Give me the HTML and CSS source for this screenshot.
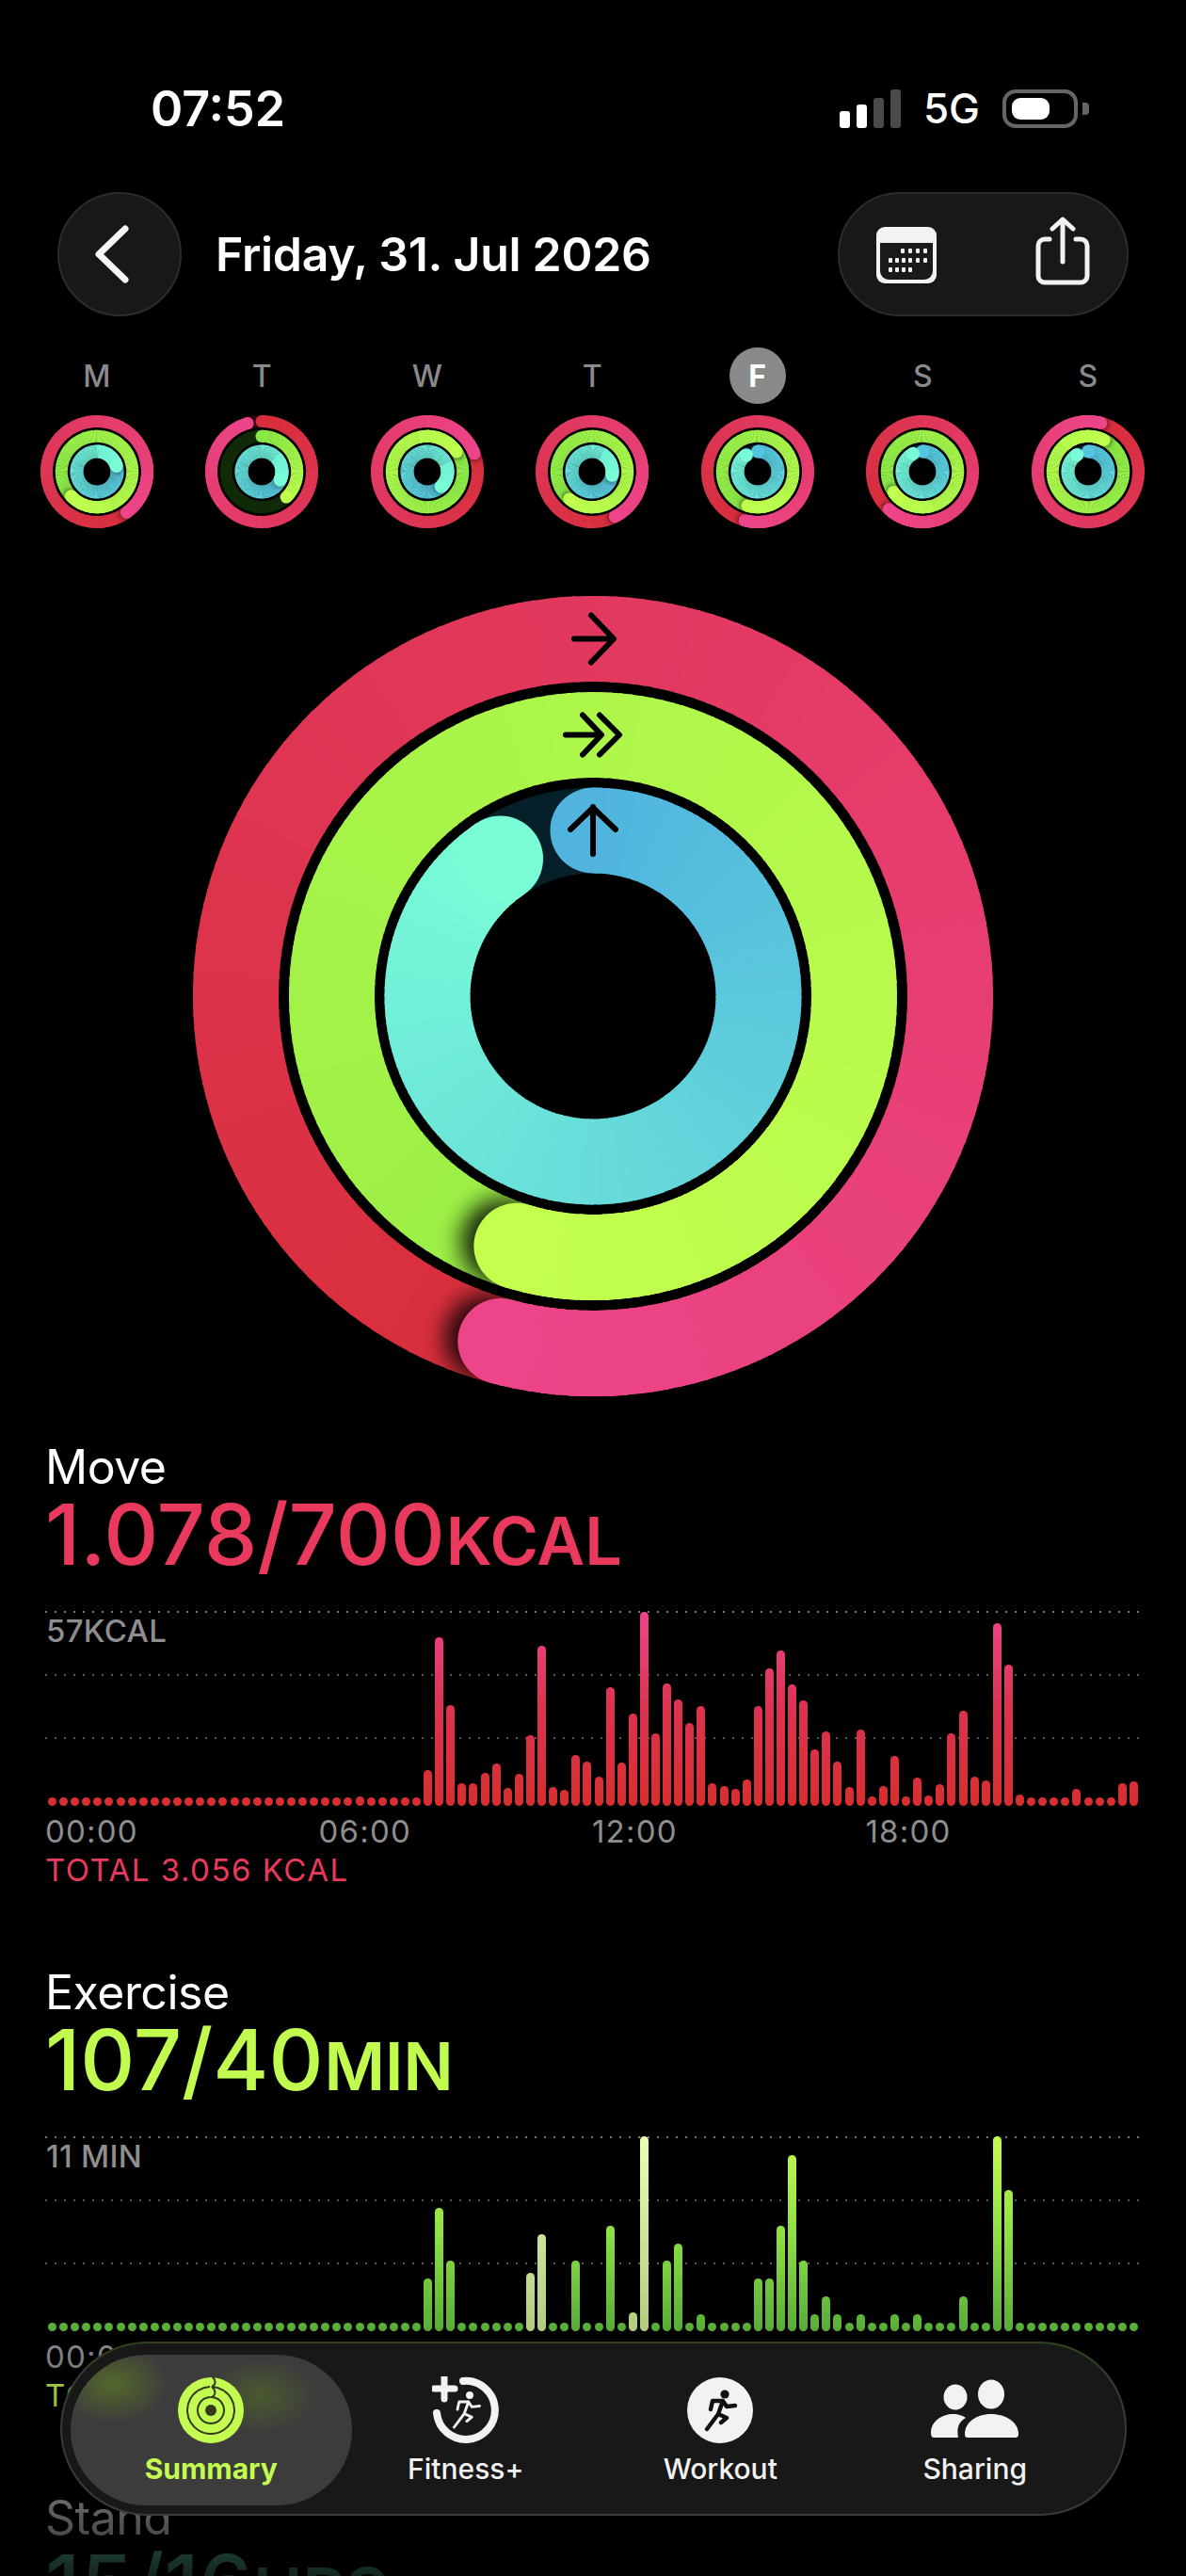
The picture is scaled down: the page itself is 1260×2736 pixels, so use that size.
FILE: index.html
```html
<!DOCTYPE html>
<html lang="en">
<head>
    <meta charset="UTF-8">
    <meta name="viewport" content="width=device-width, initial-scale=1.0">
    <title>Activity Summary</title>
    <link rel="stylesheet" href="styles.css">
</head>
<body>
    <div class="page">
        <div class="status">
            <span class="status-time">07:52</span>
            <div class="signal">
                <i class="sig-1"></i><i class="sig-2"></i><i class="sig-3"></i><i class="sig-4"></i>
            </div>
            <span class="status-net">5G</span>
            <div class="battery"><div class="battery-fill"></div></div>
            <div class="battery-nub"></div>
        </div>

        <div class="nav">
            <div class="back-btn">
                <svg width="40" height="62" viewBox="0 0 40 62"><polyline points="33,4 5,31 33,58" fill="none" stroke="#f5f5f5" stroke-width="7" stroke-linecap="round" stroke-linejoin="round"/></svg>
            </div>
            <h1 class="nav-title">Friday, 31. Jul 2026</h1>
            <div class="nav-actions">
                <svg class="cal-icon" width="64" height="60" viewBox="0 0 64 60">
                    <rect x="0" y="0" width="64" height="60" rx="9" fill="#f2f2f2"/>
                    <path d="M4 17H60V47a9 9 0 0 1-9 9H13a9 9 0 0 1-9-9Z" fill="#1a1a1a"/>
                    <g id="calDots" fill="#f2f2f2"></g>
                </svg>
                <svg width="60" height="74" viewBox="0 0 60 74">
                    <path d="M16 24H11a7 7 0 0 0-7 7V63a7 7 0 0 0 7 7H49a7 7 0 0 0 7-7V31a7 7 0 0 0-7-7H44" fill="none" stroke="#f2f2f2" stroke-width="5" stroke-linecap="round"/>
                    <path d="M30 48V3M19 13 30 3 41 13" fill="none" stroke="#f2f2f2" stroke-width="5" stroke-linecap="round" stroke-linejoin="round"/>
                </svg>
            </div>
        </div>

        <div class="week">
            <div class="day"><span class="day-label">M</span><svg class="day-ring" id="ring0" width="124" height="124" viewBox="0 0 124 124"></svg></div>
            <div class="day"><span class="day-label">T</span><svg class="day-ring" id="ring1" width="124" height="124" viewBox="0 0 124 124"></svg></div>
            <div class="day"><span class="day-label">W</span><svg class="day-ring" id="ring2" width="124" height="124" viewBox="0 0 124 124"></svg></div>
            <div class="day"><span class="day-label">T</span><svg class="day-ring" id="ring3" width="124" height="124" viewBox="0 0 124 124"></svg></div>
            <div class="day"><span class="day-label today">F</span><svg class="day-ring" id="ring4" width="124" height="124" viewBox="0 0 124 124"></svg></div>
            <div class="day"><span class="day-label">S</span><svg class="day-ring" id="ring5" width="124" height="124" viewBox="0 0 124 124"></svg></div>
            <div class="day"><span class="day-label">S</span><svg class="day-ring" id="ring6" width="124" height="124" viewBox="0 0 124 124"></svg></div>
        </div>

        <svg class="big-ring" id="bigRing" width="860" height="860" viewBox="0 0 860 860"></svg>

        <section class="metric">
            <div class="metric-name">Move</div>
            <div class="metric-value move">1.078/700<span class="unit">KCAL</span></div>
            <div class="chart">
                <div class="chart-grid"></div>
                <span class="chart-max">57KCAL</span>
                <div class="bars bars-move" id="moveBars"></div>
            </div>
            <div class="times"><span>00:00</span><span>06:00</span><span>12:00</span><span>18:00</span></div>
            <div class="total move">TOTAL 3.056 KCAL</div>
        </section>

        <section class="metric">
            <div class="metric-name">Exercise</div>
            <div class="metric-value exercise">107/40<span class="unit">MIN</span></div>
            <div class="chart">
                <div class="chart-grid"></div>
                <span class="chart-max">11 MIN</span>
                <div class="bars bars-exercise" id="exerciseBars"></div>
            </div>
            <div class="times"><span>00:00</span><span>06:00</span><span>12:00</span><span>18:00</span></div>
            <div class="total exercise">TOTAL 107 MIN</div>
        </section>

        <section class="metric">
            <div class="metric-name">Stand</div>
            <div class="metric-value stand">15/16<span class="unit">HRS</span></div>
        </section>

        <div class="fade"></div>

        <nav class="tabbar">
            <div class="tab active">
                <svg width="72" height="72" viewBox="-36 -36 72 72">
                    <circle r="35" fill="#c4fb50"/>
                    <g fill="none" stroke="#33381f" stroke-width="2">
                        <path d="M2-35C6-31 5-27 1-25A25 25 0 1 1-1-25"/>
                        <path d="M1-25C6-21 5-16 1-14A14 14 0 1 1-1-14"/>
                    </g>
                    <circle r="6" fill="#33381f"/>
                </svg>
                <span class="tab-label">Summary</span>
            </div>
            <div class="tab">
                <svg width="72" height="72" viewBox="-36 -36 72 72">
                    <defs>
                        <g id="runner" fill="none" stroke-linecap="round" stroke-linejoin="round">
                            <path d="M-10-1-8-10H3L-2 4 7 8 1 13M3-10 7-4 16-5M-2 4-8 12-14 20"/>
                        </g>
                    </defs>
                    <path d="M-3-31A31 31 0 1 1-31 3" fill="none" stroke="#f2f2f2" stroke-width="8" stroke-linecap="round"/>
                    <path d="M-23-35V-12M-34-23H-12" stroke="#f2f2f2" stroke-width="7" stroke-linecap="round"/>
                    <circle cx="4" cy="-16" r="4" fill="#f2f2f2"/>
                    <use href="#runner" stroke="#f2f2f2" stroke-width="3.2" transform="scale(0.9)"/>
                </svg>
                <span class="tab-label">Fitness+</span>
            </div>
            <div class="tab">
                <svg width="72" height="72" viewBox="-36 -36 72 72">
                    <circle r="35" fill="#f2f2f2"/>
                    <circle cx="5" cy="-17" r="4.6" fill="#111"/>
                    <use href="#runner" stroke="#111" stroke-width="4.4"/>
                </svg>
                <span class="tab-label">Workout</span>
            </div>
            <div class="tab">
                <svg width="100" height="72" viewBox="0 0 100 72">
                    <ellipse cx="29" cy="22" rx="12.5" ry="13.5" fill="#f2f2f2"/>
                    <ellipse cx="67" cy="19" rx="14" ry="15.5" fill="#f2f2f2"/>
                    <path d="M3 60C3 48 14 40 27 40 32 40 36 41 40 44 33 48 30 54 32 65H6C4 65 3 63 3 60Z" fill="#f2f2f2"/>
                    <path d="M39 61C39 49 51 40 67 40S96 49 96 61C96 64 95 65 92 65H42C40 65 39 64 39 61Z" fill="#f2f2f2"/>
                </svg>
                <span class="tab-label">Sharing</span>
            </div>
        </nav>
    </div>

    <script>
        var NS = "http://www.w3.org/2000/svg";

        var moveData = [9,9,9,9,9,9,9,9,9,9,9,9,9,9,9,9,9,9,9,9,9,9,9,9,9,9,9,10,9,9,9,9,9,
            38,179,107,24,24,35,45,19,34,75,170,20,17,54,47,31,126,46,98,206,77,130,113,88,106,24,21,18,28,
            106,146,165,129,112,60,79,47,20,81,10,21,53,10,30,11,23,77,101,31,27,194,150,12,9,9,9,9,18,9,9,9,24,26];

        var exerciseData = [9,9,9,9,9,9,9,9,9,9,9,9,9,9,9,9,9,9,9,9,9,9,9,9,9,9,9,9,9,9,9,9,9,
            56,131,75,9,9,9,9,9,9,62,103,9,9,75,9,9,112,9,20,207,9,75,93,9,18,9,9,9,9,
            56,56,112,187,75,18,37,18,9,18,9,9,18,9,18,9,9,9,37,9,9,207,150,9,9,9,9,9,9,9,9,9,9,9];

        // Exercise bars drawn in the paler tone
        var paleBars = [42, 43, 51, 52];

        // head = end angle of the ring in degrees, over = ring has gone past 100%
        var weekRings = [
            { move: [144, true],  exercise: [227, true], stand: [74, true] },
            { move: [344, false], exercise: [136, false], stand: [114, true] },
            { move: [69, true],   exercise: [56, true],  stand: [137, true] },
            { move: [153, true],  exercise: [220, true], stand: [100, true] },
            { move: [195, true],  exercise: [197, true], stand: [326, false] },
            { move: [222, true],  exercise: [235, true], stand: [333, false] },
            { move: [15, true],   exercise: [27, true],  stand: [327, false] }
        ];

        var clipCount = 0;

        function el(name, attrs, parent) {
            var node = document.createElementNS(NS, name);
            for (var key in attrs) {
                node.setAttribute(key, attrs[key]);
            }
            parent.appendChild(node);
            return node;
        }

        function polar(c, r, deg) {
            var a = deg * Math.PI / 180;
            return [c + r * Math.sin(a), c - r * Math.cos(a)];
        }

        function mix(c1, c2, t) {
            var out = "rgb(";
            for (var i = 0; i < 3; i++) {
                out += Math.round(c1[i] + (c2[i] - c1[i]) * t) + (i < 2 ? "," : ")");
            }
            return out;
        }

        // Draws part of a gradient band as many short arc pieces
        function drawBand(svg, c, r, w, from, to, c1, c2, drawFrom) {
            var step = 2;
            for (var d = drawFrom; d < to; d += step) {
                var end = Math.min(d + step + 0.6, to);
                var p1 = polar(c, r, d);
                var p2 = polar(c, r, end);
                el("path", {
                    d: "M" + p1[0] + " " + p1[1] + "A" + r + " " + r + " 0 0 1 " + p2[0] + " " + p2[1],
                    fill: "none",
                    stroke: mix(c1, c2, (d - from) / (to - from)),
                    "stroke-width": w
                }, svg);
            }
        }

        function annulus(c, r1, r2) {
            function circle(r) {
                return "M" + (c - r) + " " + c + "a" + r + " " + r + " 0 1 0 " + (2 * r) + " 0a" + r + " " + r + " 0 1 0 " + (-2 * r) + " 0Z";
            }
            return circle(r1) + circle(r2);
        }

        function drawRing(svg, c, r, w, head, over, c1, c2, track, blur, shade) {
            var capHead = polar(c, r, head);
            var to = over ? head + 360 : head;
            var from = over ? head : 0;

            if (over) {
                drawBand(svg, c, r, w, from, to, c1, c2, from);

                // shadow the head casts on the ring underneath
                clipCount++;
                var defs = el("defs", {}, svg);
                var clip = el("clipPath", { id: "clip" + clipCount }, defs);
                el("path", { d: annulus(c, r - w / 2, r + w / 2), "clip-rule": "evenodd" }, clip);
                var filter = el("filter", { id: "blur" + clipCount, x: "-50%", y: "-50%", width: "200%", height: "200%" }, defs);
                el("feGaussianBlur", { stdDeviation: blur }, filter);
                var group = el("g", { "clip-path": "url(#clip" + clipCount + ")" }, svg);
                var spot = polar(c, r, head + (w * 0.16 / r) * 180 / Math.PI);
                el("circle", { cx: spot[0], cy: spot[1], r: w / 2, fill: "#000", "fill-opacity": shade, filter: "url(#blur" + clipCount + ")" }, group);

                drawBand(svg, c, r, w, from, to, c1, c2, to - 70);
            } else {
                el("circle", { cx: c, cy: c, r: r, fill: "none", stroke: track, "stroke-width": w }, svg);
                var capStart = polar(c, r, 0);
                el("circle", { cx: capStart[0], cy: capStart[1], r: w / 2, fill: mix(c1, c2, 0) }, svg);
                drawBand(svg, c, r, w, from, to, c1, c2, from);
            }
            el("circle", { cx: capHead[0], cy: capHead[1], r: w / 2, fill: mix(c1, c2, 1) }, svg);
        }

        function drawArrows(svg) {
            var attrs = { fill: "none", stroke: "#000", "stroke-width": 6, "stroke-linecap": "round", "stroke-linejoin": "round" };
            var arrows = [
                "M410 50.5H451M428 25.5 452 50.5 428 75.5",
                "M401 152.5H438M419 131.5 439 152.5 419 173.5M437 131.5 458 152.5 437 173.5",
                "M430 279V229M406 253 430 230 454 253"
            ];
            arrows.forEach(function(d) {
                attrs.d = d;
                el("path", attrs, svg);
            });
        }

        function drawBars(id, data) {
            var box = document.getElementById(id);
            data.forEach(function(h, i) {
                var bar = document.createElement("div");
                bar.className = "bar";
                if (id === "exerciseBars" && paleBars.indexOf(i) !== -1) {
                    bar.className = "bar pale";
                }
                bar.style.height = h + "px";
                box.appendChild(bar);
            });
        }

        // Calendar icon dots
        var calDots = document.getElementById("calDots");
        [[26, 34, 42, 50], [13, 20, 27, 34, 42, 50], [13, 20, 27, 34]].forEach(function(row, y) {
            row.forEach(function(x) {
                el("rect", { x: x, y: 23 + y * 10, width: 4, height: 5, rx: 1 }, calDots);
            });
        });

        var moveColors = [[216, 46, 58], [237, 69, 138]];
        var standColors = [[80, 180, 222], [122, 253, 215]];

        // Small rings for the week strip
        weekRings.forEach(function(day, i) {
            var svg = document.getElementById("ring" + i);
            drawRing(svg, 62, 53.5, 13, day.move[0], day.move[1], moveColors[0], moveColors[1], "#2a0410", 2.5, 0.45);
            drawRing(svg, 62, 37.7, 13, day.exercise[0], day.exercise[1], [136, 232, 70], [192, 255, 78], "#102a08", 2.5, 0.45);
            drawRing(svg, 62, 21.5, 14, day.stand[0], day.stand[1], [84, 196, 224], standColors[1], "#06202a", 2, 0.3);
        });

        // Big ring in the middle of the page
        var big = document.getElementById("bigRing");
        drawRing(big, 430, 379.5, 91, 195, true, moveColors[0], moveColors[1], "#000", 12, 0.85);
        drawRing(big, 430, 277.5, 91, 197, true, [155, 239, 71], [196, 255, 78], "#000", 12, 0.85);
        drawRing(big, 430, 176, 91, 326, false, standColors[0], standColors[1], "#06202a", 12, 0.85);
        drawArrows(big);

        drawBars("moveBars", moveData);
        drawBars("exerciseBars", exerciseData);
    </script>
</body>
</html>
```

FILE: styles.css
```css
body {
    margin: 0;
    background-color: #000;
    font-family: Inter, "Noto Sans", sans-serif;
    color: #fff;
}
.page {
    position: relative;
    width: 1260px;
    height: 2736px;
    overflow: hidden;
}

/* status bar */
.status {
    display: flex;
    align-items: center;
    box-sizing: border-box;
    height: 160px;
    padding: 70px 103px 0 160px;
}
.status-time {
    font-size: 52px;
    font-weight: 600;
}
.signal {
    display: flex;
    align-items: flex-end;
    gap: 7px;
    height: 41px;
    margin-left: auto;
    margin-top: 1px;
}
.signal i {
    display: block;
    width: 11px;
    border-radius: 3px;
    background-color: #fff;
}
.sig-1 { height: 18px; }
.sig-2 { height: 25px; }
.signal .sig-3 { height: 32px; background-color: #4a4a4a; }
.signal .sig-4 { height: 41px; background-color: #4a4a4a; }
.status-net {
    margin-left: 24px;
    font-size: 44px;
    font-weight: 500;
}
.battery {
    box-sizing: border-box;
    width: 80px;
    height: 41px;
    margin-left: 24px;
    padding: 5px 6px;
    border: 4px solid #666;
    border-radius: 14px;
}
.battery-fill {
    width: 40px;
    height: 100%;
    border-radius: 9px;
    background-color: #fff;
}
.battery-nub {
    width: 7px;
    height: 13px;
    margin-left: 5px;
    border-radius: 0 4px 4px 0;
    background-color: #666;
}

/* date row */
.nav {
    display: flex;
    align-items: center;
    height: 132px;
    margin-top: 44px;
    padding: 0 61px;
}
.back-btn {
    display: flex;
    align-items: center;
    justify-content: center;
    box-sizing: border-box;
    width: 132px;
    height: 132px;
    padding-right: 14px;
    border: 2px solid #2c2c2c;
    border-radius: 50%;
    background-color: #181818;
}
.nav-title {
    margin: 0 0 0 36px;
    font-size: 50px;
    font-weight: 600;
    letter-spacing: -0.3px;
}
.nav-actions {
    display: flex;
    align-items: center;
    justify-content: space-between;
    box-sizing: border-box;
    width: 309px;
    height: 132px;
    margin-left: auto;
    padding: 0 38px 6px 39px;
    border: 2px solid #2c2c2c;
    border-radius: 66px;
    background-color: #181818;
}
.cal-icon {
    margin-top: 8px;
}

/* week strip */
.week {
    display: grid;
    grid-template-columns: repeat(7, 175.5px);
    margin-top: 33px;
    padding-left: 15px;
}
.day {
    display: flex;
    flex-direction: column;
    align-items: center;
}
.day-label {
    display: flex;
    align-items: center;
    justify-content: center;
    width: 60px;
    height: 60px;
    border-radius: 50%;
    color: #8a8a8e;
    font-size: 32px;
    font-weight: 500;
}
.day-label.today {
    background-color: #8a8a8a;
    color: #fff;
    font-weight: 700;
}
.day-ring {
    margin-top: 10px;
}
.big-ring {
    display: block;
    margin: 65px auto 40px;
}

/* metric sections */
.metric {
    margin-bottom: 80px;
    padding-left: 48px;
}
.metric-name {
    font-size: 50px;
    line-height: 60px;
    letter-spacing: -0.5px;
}
.metric-value {
    font-size: 90px;
    font-weight: 500;
    line-height: 84px;
}
.unit {
    margin-left: 1px;
    font-size: 70px;
    font-weight: 600;
    line-height: 0;
}
.move { color: #e93a5e; }
.exercise { color: #c2fb4f; }
.stand { color: #7afdd7; }

.chart {
    position: relative;
    width: 1162px;
    height: 207px;
    margin-top: 39px;
}
.chart-grid {
    height: 136px;
    background-image:
        linear-gradient(90deg, #7a7a7a 2px, transparent 2px),
        linear-gradient(90deg, #5a5a5a 2px, transparent 2px),
        linear-gradient(90deg, #5a5a5a 2px, transparent 2px);
    background-size: 10px 2px;
    background-position: 0 0, 0 67px, 0 134px;
    background-repeat: repeat-x;
}
.chart-max {
    position: absolute;
    top: 1px;
    left: 1px;
    color: #8e8e8e;
    font-size: 33px;
    font-weight: 500;
    line-height: 40px;
    letter-spacing: 0.3px;
}
.bars {
    position: absolute;
    right: 0;
    bottom: 0;
    left: 0;
    display: flex;
    align-items: flex-end;
    gap: 3.095px;
    padding-left: 3px;
}
.bar {
    flex: 0 0 9px;
    border-radius: 5px;
    background-position: bottom;
    background-size: 100% 207px;
}
.bars-move .bar {
    background-image: linear-gradient(to top, #d82e30 0%, #dc3350 50%, #ed458a 100%);
}
.bars-exercise .bar {
    background-image: linear-gradient(to top, #57ad39 0%, #8ee044 50%, #c6fb50 100%);
}
.bars-exercise .bar.pale {
    background-image: linear-gradient(to top, #b3cc7c 0%, #eaffb5 100%);
}
.times {
    display: flex;
    margin-top: 7px;
    color: #8e8e8e;
    font-size: 33px;
    line-height: 40px;
    letter-spacing: 1.2px;
}
.times span {
    width: 290.5px;
}
.total {
    margin-top: 1px;
    font-size: 33px;
    line-height: 40px;
    letter-spacing: 1.5px;
}

/* bottom fade and tab bar */
.fade {
    position: absolute;
    right: 0;
    bottom: 0;
    left: 0;
    height: 266px;
    background-image: linear-gradient(to bottom, rgba(0, 0, 0, 0), rgba(0, 0, 0, 0.85));
}
.tabbar {
    position: absolute;
    bottom: 64px;
    left: 64px;
    display: grid;
    grid-template-columns: repeat(4, 270.5px);
    box-sizing: border-box;
    width: 1133px;
    height: 185px;
    padding: 35px 0 0 23px;
    border: 2px solid #3a3a3a;
    border-top-color: #2e4320;
    border-radius: 93px;
    background-color: #181818;
}
.tab {
    position: relative;
    display: flex;
    flex-direction: column;
    align-items: center;
}
.tab svg,
.tab-label {
    position: relative;
}
.tab.active::before {
    content: "";
    position: absolute;
    top: -23px;
    bottom: 9px;
    left: -14px;
    right: -14px;
    border-radius: 81px;
    background-image:
        radial-gradient(ellipse 60px 42px at 45px 31px, rgba(120, 170, 20, 0.4), transparent),
        radial-gradient(ellipse 60px 40px at 202px 44px, rgba(110, 160, 20, 0.3), transparent);
    background-color: #3c3c3c;
}
.tab-label {
    margin-top: 8px;
    color: #f2f2f2;
    font-size: 30px;
    font-weight: 500;
    line-height: 36px;
}
.tab.active .tab-label {
    color: #c4fb50;
    font-weight: 700;
}
```
